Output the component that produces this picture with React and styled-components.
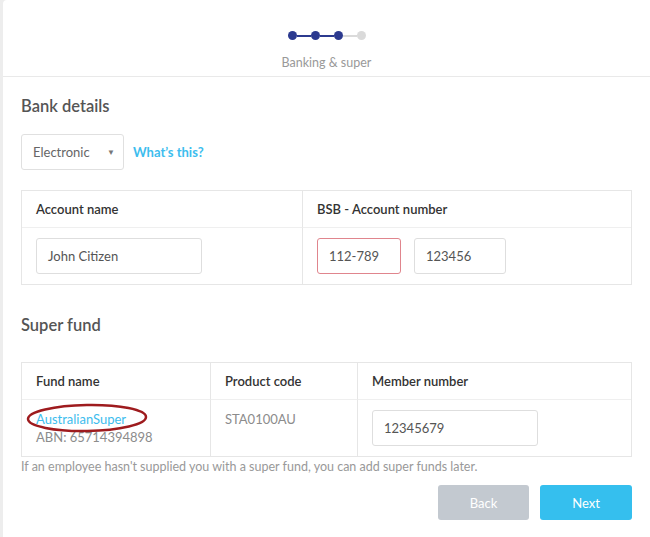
import React from 'react';
import styled, { createGlobalStyle } from 'styled-components';

const GlobalStyle = createGlobalStyle`
  html, body { margin: 0; padding: 0; }
  body {
    background: #ededed;
    font-family: Lato, "Open Sans", "Liberation Sans", sans-serif;
    color: #444;
  }
  * { box-sizing: border-box; }
`;

const Panel = styled.div`
  margin-left: 3px;
  min-height: 537px;
  background: #fff;
  border-top-left-radius: 4px;
`;

const Header = styled.div`
  height: 77px;
  padding-top: 31px;
  border-bottom: 1px solid #e9e9e9;
  display: flex;
  flex-direction: column;
  align-items: center;
`;

const Stepper = styled.div`
  display: flex;
  align-items: center;
`;

const Dot = styled.span`
  width: 9px;
  height: 9px;
  border-radius: 50%;
  background: ${p => (p.$done ? '#2c3a8f' : '#dadada')};
`;

const Line = styled.span`
  width: 14px;
  height: 2px;
  background: ${p => (p.$done ? '#2c3a8f' : '#dadada')};
`;

const StepLabel = styled.div`
  margin-top: 15px;
  font-size: 12.5px;
  color: #999;
`;

const Body = styled.div`
  padding: 19px 18px 0 18px;
`;

const Heading = styled.h2`
  margin: 0;
  font-size: 16.5px;
  font-weight: 600;
  color: #555;
  line-height: 20px;
`;

const MethodRow = styled.div`
  margin-top: 18px;
  display: flex;
  align-items: center;
  gap: 9px;
`;

const Select = styled.div`
  width: 103px;
  height: 36px;
  border: 1px solid #e0e0e0;
  border-radius: 3px;
  display: flex;
  align-items: center;
  justify-content: space-between;
  padding: 0 8px 0 11px;
  font-size: 13px;
  color: #666;
`;

const Caret = styled.span`
  font-size: 8px;
  color: #777;
`;

const Link = styled.a`
  font-size: 13px;
  font-weight: 700;
  color: #3dbdee;
  text-decoration: none;
`;

const Table = styled.div`
  margin-top: ${p => p.$top}px;
  display: grid;
  grid-template-columns: ${p => p.$cols};
  border: 1px solid #e6e6e6;
`;

const HeadCell = styled.div`
  height: 37px;
  display: flex;
  align-items: center;
  padding-left: 14px;
  font-size: 13px;
  font-weight: 600;
  color: #333;
  border-bottom: 1px solid #efefef;
  & + & { border-left: 1px solid #e6e6e6; }
`;

const Cell = styled.div`
  position: relative;
  padding: 10px 14px;
  border-left: ${p => (p.$first ? 'none' : '1px solid #e6e6e6')};
  display: flex;
  gap: 13px;
  align-items: flex-start;
`;

const Input = styled.div`
  width: ${p => p.$w}px;
  height: 36px;
  border: 1px solid ${p => (p.$error ? '#e0858d' : '#dedede')};
  border-radius: 3px;
  display: flex;
  align-items: center;
  padding-left: 11px;
  font-size: 13px;
  color: #555;
`;

const TextStack = styled.div`
  padding-top: 1px;
  display: flex;
  flex-direction: column;
  gap: 2px;
  font-size: 13px;
`;

const FundLink = styled.span`
  color: #3dbdee;
`;

const Muted = styled.span`
  color: #8c8c8c;
`;

const Mark = styled.svg`
  position: absolute;
  left: 2px;
  top: 3px;
  overflow: visible;
`;

const SectionGap = styled.div`
  margin-top: 30px;
`;

const Note = styled.p`
  margin: 2px 0 0;
  font-size: 12.5px;
  color: #999;
`;

const Actions = styled.div`
  margin-top: 11px;
  display: flex;
  justify-content: flex-end;
  gap: 11px;
`;

const Button = styled.button`
  width: ${p => p.$w}px;
  height: 35px;
  border: none;
  border-radius: 3px;
  background: ${p => (p.$primary ? '#35bfee' : '#c3c9d0')};
  color: #fff;
  font-family: inherit;
  font-size: 13px;
`;

export default function App() {
  return (
    <>
      <GlobalStyle />
      <Panel>
        <Header>
          <Stepper>
            <Dot $done /><Line $done />
            <Dot $done /><Line $done />
            <Dot $done /><Line />
            <Dot />
          </Stepper>
          <StepLabel>Banking &amp; super</StepLabel>
        </Header>
        <Body>
          <Heading>Bank details</Heading>
          <MethodRow>
            <Select>Electronic <Caret>▼</Caret></Select>
            <Link href="#">What’s this?</Link>
          </MethodRow>
          <Table $top={20} $cols="280px 1fr">
            <HeadCell>Account name</HeadCell>
            <HeadCell>BSB - Account number</HeadCell>
            <Cell $first><Input $w={166}>John Citizen</Input></Cell>
            <Cell>
              <Input $w={84} $error>112-789</Input>
              <Input $w={92}>123456</Input>
            </Cell>
          </Table>

          <SectionGap>
            <Heading>Super fund</Heading>
          </SectionGap>
          <Table $top={27} $cols="188px 147px 1fr">
            <HeadCell>Fund name</HeadCell>
            <HeadCell>Product code</HeadCell>
            <HeadCell>Member number</HeadCell>
            <Cell $first>
              <TextStack>
                <FundLink>AustralianSuper</FundLink>
                <Muted>ABN: 65714394898</Muted>
              </TextStack>
              <Mark width="124" height="30" viewBox="0 0 124 30">
                <ellipse cx="63" cy="15" rx="59" ry="13" fill="none" stroke="#9e1b1e" strokeWidth="2.5" transform="rotate(-1 63 15)" />
              </Mark>
            </Cell>
            <Cell>
              <TextStack><Muted>STA0100AU</Muted></TextStack>
            </Cell>
            <Cell><Input $w={166}>12345679</Input></Cell>
          </Table>
          <Note>If an employee hasn't supplied you with a super fund, you can add super funds later.</Note>
          <Actions>
            <Button $w={91}>Back</Button>
            <Button $w={92} $primary>Next</Button>
          </Actions>
        </Body>
      </Panel>
    </>
  );
}
